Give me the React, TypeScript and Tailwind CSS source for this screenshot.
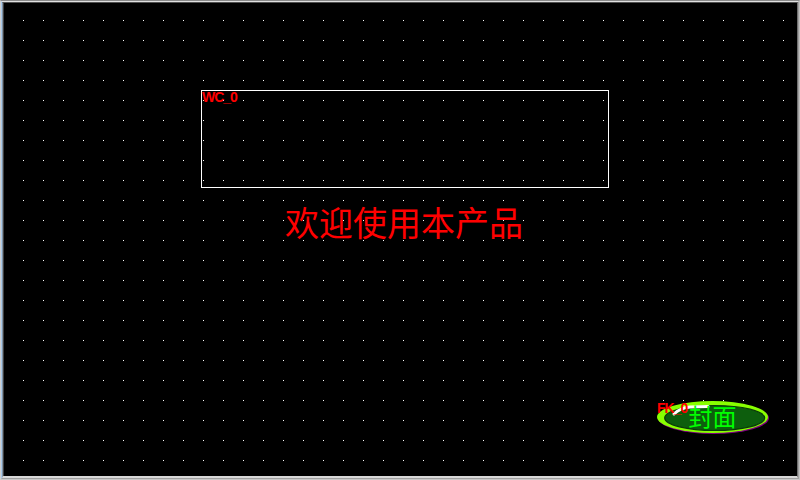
import React from "react";

export default function App() {
  return (
    <div className="w-[800px] h-[480px] bg-black border border-t-[#8a8a8a] border-l-[#d0d0d0] border-r-[#c0c0c0] border-b-[#c8c8c8]">
      <div className="w-full h-full border border-t-[#e0e0e0] border-l-[#a8c8e8] border-r-[#a0a0a0] border-b-[#a0a0a0]">
        <div className="w-full h-full border border-t-[#505050] border-l-[#8090a0] border-r-[#707070] border-b-[#d8d8d8] border-b-[2px]">
          <div className="w-full h-full border-l border-l-[#404040]">
            <div
              className="relative w-full h-full bg-black overflow-hidden"
              style={{ fontFamily: '"Liberation Sans", Arial, sans-serif' }}
            >
              <svg className="absolute inset-0" width="100%" height="100%">
                <defs>
                  <pattern id="grid" x="-1" y="-3" width="20" height="20" patternUnits="userSpaceOnUse">
                    <rect x="0" y="0" width="1" height="1" fill="#ffffff" />
                  </pattern>
                </defs>
                <rect width="100%" height="100%" fill="url(#grid)" />
              </svg>

              {/* WC_0 frame */}
              <div className="absolute left-[197px] top-[87px] w-[408px] h-[98px] border border-white">
                <div className="-mt-px text-[14px] leading-[15px] font-bold tracking-[-1px] text-[#ff0000]">WC_0</div>
              </div>

              {/* Welcome text */}
              <div
                className="absolute left-[200px] top-[202px] w-[400px] text-center text-[34px] leading-[34px] text-[#ff0000]"
                style={{ fontFamily: '"Noto Sans CJK SC", "Noto Sans", sans-serif' }}
              >
                欢迎使用本产品
              </div>

              {/* Button FK_0 */}
              <div className="absolute left-[651px] top-[395px] w-[115px] h-[38px]">
                <svg className="absolute inset-0" width="115" height="38" viewBox="0 0 115 38">
                  <ellipse cx="58.5" cy="20" rx="55.5" ry="16" fill="#800080" />
                  <ellipse cx="57.5" cy="19" rx="55.5" ry="16" fill="#88ff00" />
                  <ellipse cx="59.7" cy="20" rx="50" ry="12.5" fill="#0d5e0d" stroke="#0a3a0a" strokeWidth="1.2" />
                  <path d="M 19 16 Q 25 10 35 9 L 53 8.5" stroke="#ffffff" strokeWidth="3" fill="none" strokeLinecap="round" />
                </svg>
                <div
                  className="absolute left-[15px] top-[6px] w-[85px] text-center text-[24px] leading-[24px] text-[#00ff00]"
                  style={{ fontFamily: '"Noto Sans CJK SC", "Noto Sans", sans-serif' }}
                >
                  封面
                </div>
                <div className="absolute left-[2px] top-[3px] text-[14px] leading-[15px] font-bold tracking-[-1px] text-[#ff0000]">
                  FK_0
                </div>
              </div>
            </div>
          </div>
        </div>
      </div>
    </div>
  );
}
